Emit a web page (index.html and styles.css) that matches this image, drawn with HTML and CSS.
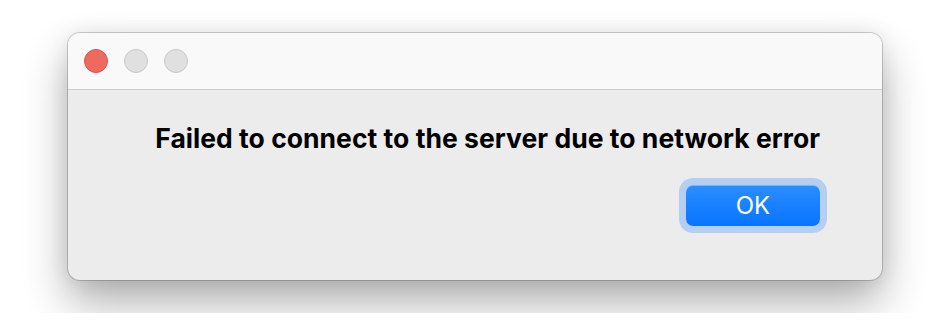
FILE: index.html
```html
<!DOCTYPE html>
<html lang="en">
<head>
    <meta charset="UTF-8">
    <meta name="viewport" content="width=device-width, initial-scale=1.0">
    <title>Error</title>
    <link rel="stylesheet" href="styles.css">
</head>
<body>
    <div class="window">
        <div class="titlebar">
            <span class="light light-close"></span>
            <span class="light"></span>
            <span class="light"></span>
        </div>

        <div class="content">
            <p class="message">Failed to connect to the server due to network error</p>
            <button class="ok-btn">OK</button>
        </div>
    </div>
</body>
</html>
```

FILE: styles.css
```css
body {
    margin: 0;
    padding: 33px 68px;
    background-color: #fff;
    font-family: Inter, "Noto Sans", sans-serif;
}

.window {
    display: flex;
    flex-direction: column;
    width: 814px;
    height: 247px;
    box-sizing: border-box;
    border-radius: 12px;
    overflow: hidden;
    background-color: #ececec;
    box-shadow:
        0 0 0 1px rgba(0,0,0,0.18),
        0 22px 44px rgba(0,0,0,0.32),
        0 0 20px rgba(0,0,0,0.08);
}

.titlebar {
    display: flex;
    align-items: center;
    gap: 16px;
    height: 56px;
    padding-left: 16px;
    background-color: #f9f9f9;
    border-bottom: 1px solid #cdcdcd;
}

.light {
    width: 22px;
    height: 22px;
    border-radius: 50%;
    background-color: #e0e0e0;
    border: 1px solid #c8c8c8;
}

.light-close {
    background-color: #ee695e;
    border-color: #d8554b;
}

.content {
    display: flex;
    flex-direction: column;
    align-items: flex-end;
    padding: 32px 62px 0 0;
}

.message {
    margin: 0;
    font-size: 26.5px;
    line-height: 32px;
    font-weight: 700;
    letter-spacing: 0.03px;
    color: #000;
}

.ok-btn {
    margin-top: 31px;
    width: 134px;
    height: 41px;
    border: none;
    border-radius: 7px;
    background: linear-gradient(#2b8dff, #0874ff);
    color: #fff;
    font-family: Inter, "Noto Sans", sans-serif;
    font-size: 24px;
    box-shadow:
        inset 0 1px 0 rgba(255,255,255,0.35),
        0 0 0 7px #b5cff2;
    cursor: pointer;
}
```
